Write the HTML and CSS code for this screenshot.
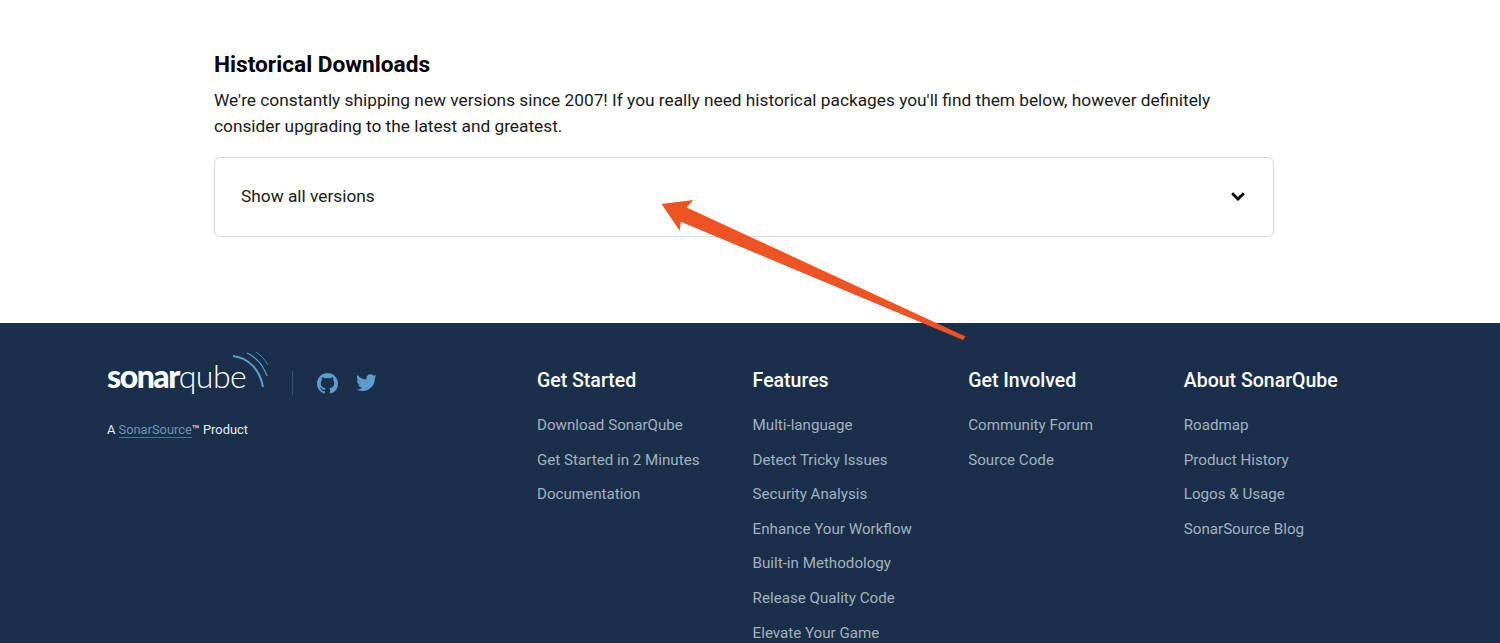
FILE: index.html
```html
<!DOCTYPE html>
<html lang="en">
<head>
  <meta charset="UTF-8" />
  <title>Download SonarQube</title>
  <link rel="stylesheet" href="styles.css">
</head>
<body>

  <section class="history">
    <h2>Historical Downloads</h2>
    <p>We're constantly shipping new versions since 2007! If you really need historical packages you'll find them below, however definitely consider upgrading to the latest and greatest.</p>
    <div class="versions">
      <span>Show all versions</span>
      <svg class="chevron" width="14" height="9" viewBox="0 0 14 9">
        <path d="M1.200 1.300 7 7l5.800-5.700" fill="none" stroke="#000" stroke-width="2.800"/>
      </svg>
    </div>
  </section>

  <footer class="footer">
    <div class="brand">
      <div class="brand-top">
        <div class="logo">
          <span class="logo-sonar">sonar</span><span class="logo-qube">qube</span>
          <svg class="logo-waves" width="40" height="38" viewBox="0 0 40 38">
            <path d="M1 4C17 6 28 18 31 35" fill="none" stroke="#5b9bd0" stroke-width="2"/>
            <path d="M15 1C24 5 31 13 35 24" fill="none" stroke="#5b9bd0" stroke-width="1.200"/>
            <path d="M24 0C29 3 33 8 36 13" fill="none" stroke="#5b9bd0" stroke-width="0.800"/>
          </svg>
        </div>
        <span class="brand-sep"></span>
        <svg class="social social-github" width="21" height="21" viewBox="0 0 16 16">
          <path fill="#5f9bcd" d="M8 0C3.58 0 0 3.58 0 8c0 3.54 2.29 6.53 5.47 7.59.4.07.55-.17.55-.38 0-.19-.01-.82-.01-1.49-2.01.37-2.53-.49-2.69-.94-.09-.23-.48-.94-.82-1.13-.28-.15-.68-.52-.01-.53.63-.01 1.08.58 1.23.82.72 1.21 1.87.87 2.33.66.07-.52.28-.87.51-1.07-1.78-.2-3.64-.89-3.64-3.95 0-.87.31-1.59.82-2.15-.08-.2-.36-1.02.08-2.12 0 0 .67-.21 2.2.82.64-.18 1.32-.27 2-.27s1.36.09 2 .27c1.53-1.04 2.2-.82 2.2-.82.44 1.1.16 1.92.08 2.12.51.56.82 1.27.82 2.15 0 3.07-1.87 3.75-3.65 3.95.29.25.54.73.54 1.48 0 1.07-.01 1.93-.01 2.2 0 .21.15.46.55.38A8.01 8.01 0 0 0 16 8c0-4.42-3.58-8-8-8z"/>
        </svg>
        <svg class="social" width="21" height="18" viewBox="0 0 24 20">
          <path fill="#5f9bcd" d="M24 2.4c-.9.4-1.8.7-2.8.8 1-.6 1.8-1.6 2.2-2.7-1 .6-2 1-3.1 1.2C19.4.7 18.100 0 16.600 0c-2.700 0-4.900 2.200-4.900 4.900 0 .4 0 .8.100 1.100C7.700 5.800 4.100 3.900 1.700.9c-.4.700-.7 1.600-.7 2.500 0 1.700.9 3.200 2.200 4.100-.8 0-1.600-.2-2.200-.6v.1c0 2.400 1.700 4.400 3.900 4.800-.4.100-.8.200-1.300.2-.3 0-.6 0-.9-.1.6 2 2.400 3.400 4.600 3.400-1.700 1.300-3.800 2.100-6.100 2.100-.4 0-.8 0-1.200-.1C2.200 18.200 4.800 19 7.500 19c9.100 0 14-7.500 14-14v-.6c1-.7 1.800-1.500 2.500-2z"/>
        </svg>
      </div>
      <p class="brand-note">A <a href="#">SonarSource</a>™ Product</p>
    </div>

    <nav class="footer-col">
      <h3>Get Started</h3>
      <a href="#">Download SonarQube</a>
      <a href="#">Get Started in 2 Minutes</a>
      <a href="#">Documentation</a>
    </nav>
    <nav class="footer-col">
      <h3>Features</h3>
      <a href="#">Multi-language</a>
      <a href="#">Detect Tricky Issues</a>
      <a href="#">Security Analysis</a>
      <a href="#">Enhance Your Workflow</a>
      <a href="#">Built-in Methodology</a>
      <a href="#">Release Quality Code</a>
      <a href="#">Elevate Your Game</a>
    </nav>
    <nav class="footer-col">
      <h3>Get Involved</h3>
      <a href="#">Community Forum</a>
      <a href="#">Source Code</a>
    </nav>
    <nav class="footer-col">
      <h3>About SonarQube</h3>
      <a href="#">Roadmap</a>
      <a href="#">Product History</a>
      <a href="#">Logos &amp; Usage</a>
      <a href="#">SonarSource Blog</a>
    </nav>
  </footer>

  <!-- annotation drawn over the page -->
  <svg class="arrow" width="1500" height="643" viewBox="0 0 1500 643">
    <path fill="#ee5423" d="M661.500 204 693.300 200 686.700 207.500 965.500 336.500 963 340 680.800 221.700 679.700 230.700z"/>
  </svg>

</body>
</html>
```

FILE: styles.css
```css
html, body {
  height: 643px;
  overflow: hidden;
}

body {
  margin: 0;
  padding: 0;
  background: #ffffff;
  font-family: 'Roboto', sans-serif;
  color: #000;
  position: relative;
}

.history {
  width: 1060px;
  height: 323px;
  box-sizing: border-box;
  margin-left: 214px;
  padding-top: 50px;
}

.history h2 {
  margin: 0 0 7px;
  font-size: 22.700px;
  line-height: 30px;
  font-weight: 700;
}

.history p {
  margin: 0 0 18px;
  font-size: 17.300px;
  line-height: 26px;
  color: #1a1a1a;
}

.versions {
  height: 80px;
  box-sizing: border-box;
  border: 1px solid #d8d8d8;
  border-radius: 6px;
  padding: 0 28px 2px 26px;
  display: flex;
  align-items: center;
  justify-content: space-between;
  font-size: 17.300px;
  color: #1a1a1a;
}

.footer {
  background: #1a304a;
  height: 320px;
  box-sizing: border-box;
  padding: 30px 0 0 107px;
  display: flex;
}

.brand {
  width: 430px;
}

.brand-top {
  display: flex;
  align-items: center;
  height: 60px;
}

.logo {
  position: relative;
  width: 162px;
  margin-bottom: 9px;
  color: #fff;
  line-height: 36px;
  font-family: 'Lato', sans-serif;
  white-space: nowrap;
}

.logo-sonar {
  font-size: 32px;
  font-weight: 900;
  letter-spacing: -1.500px;
}

.logo-qube {
  font-size: 32px;
  font-weight: 300;
  letter-spacing: -0.500px;
}

.logo-waves {
  position: absolute;
  left: 125px;
  top: -6px;
}

.brand-sep {
  width: 1px;
  height: 24px;
  background: #36506d;
  margin: 0 24px 0 23px;
}

.social {
  margin-right: 18px;
}

.brand-note {
  margin: 7px 0 0;
  font-size: 12.850px;
  line-height: 20px;
  color: #e8ecf0;
}

.brand-note a {
  color: #6f93b5;
  text-decoration: none;
  border-bottom: 1px solid #4d7396;
}

.footer-col {
  width: 215.600px;
  display: flex;
  flex-direction: column;
  align-items: flex-start;
}

.footer-col h3 {
  margin: 14px 0 18px;
  font-size: 19.500px;
  line-height: 28px;
  font-weight: 500;
  color: #fff;
}

.footer-col a {
  font-size: 15.150px;
  line-height: 24px;
  margin-bottom: 10.600px;
  color: #a3b0bf;
  text-decoration: none;
}

.arrow {
  position: absolute;
  left: 0;
  top: 0;
  pointer-events: none;
}
```
